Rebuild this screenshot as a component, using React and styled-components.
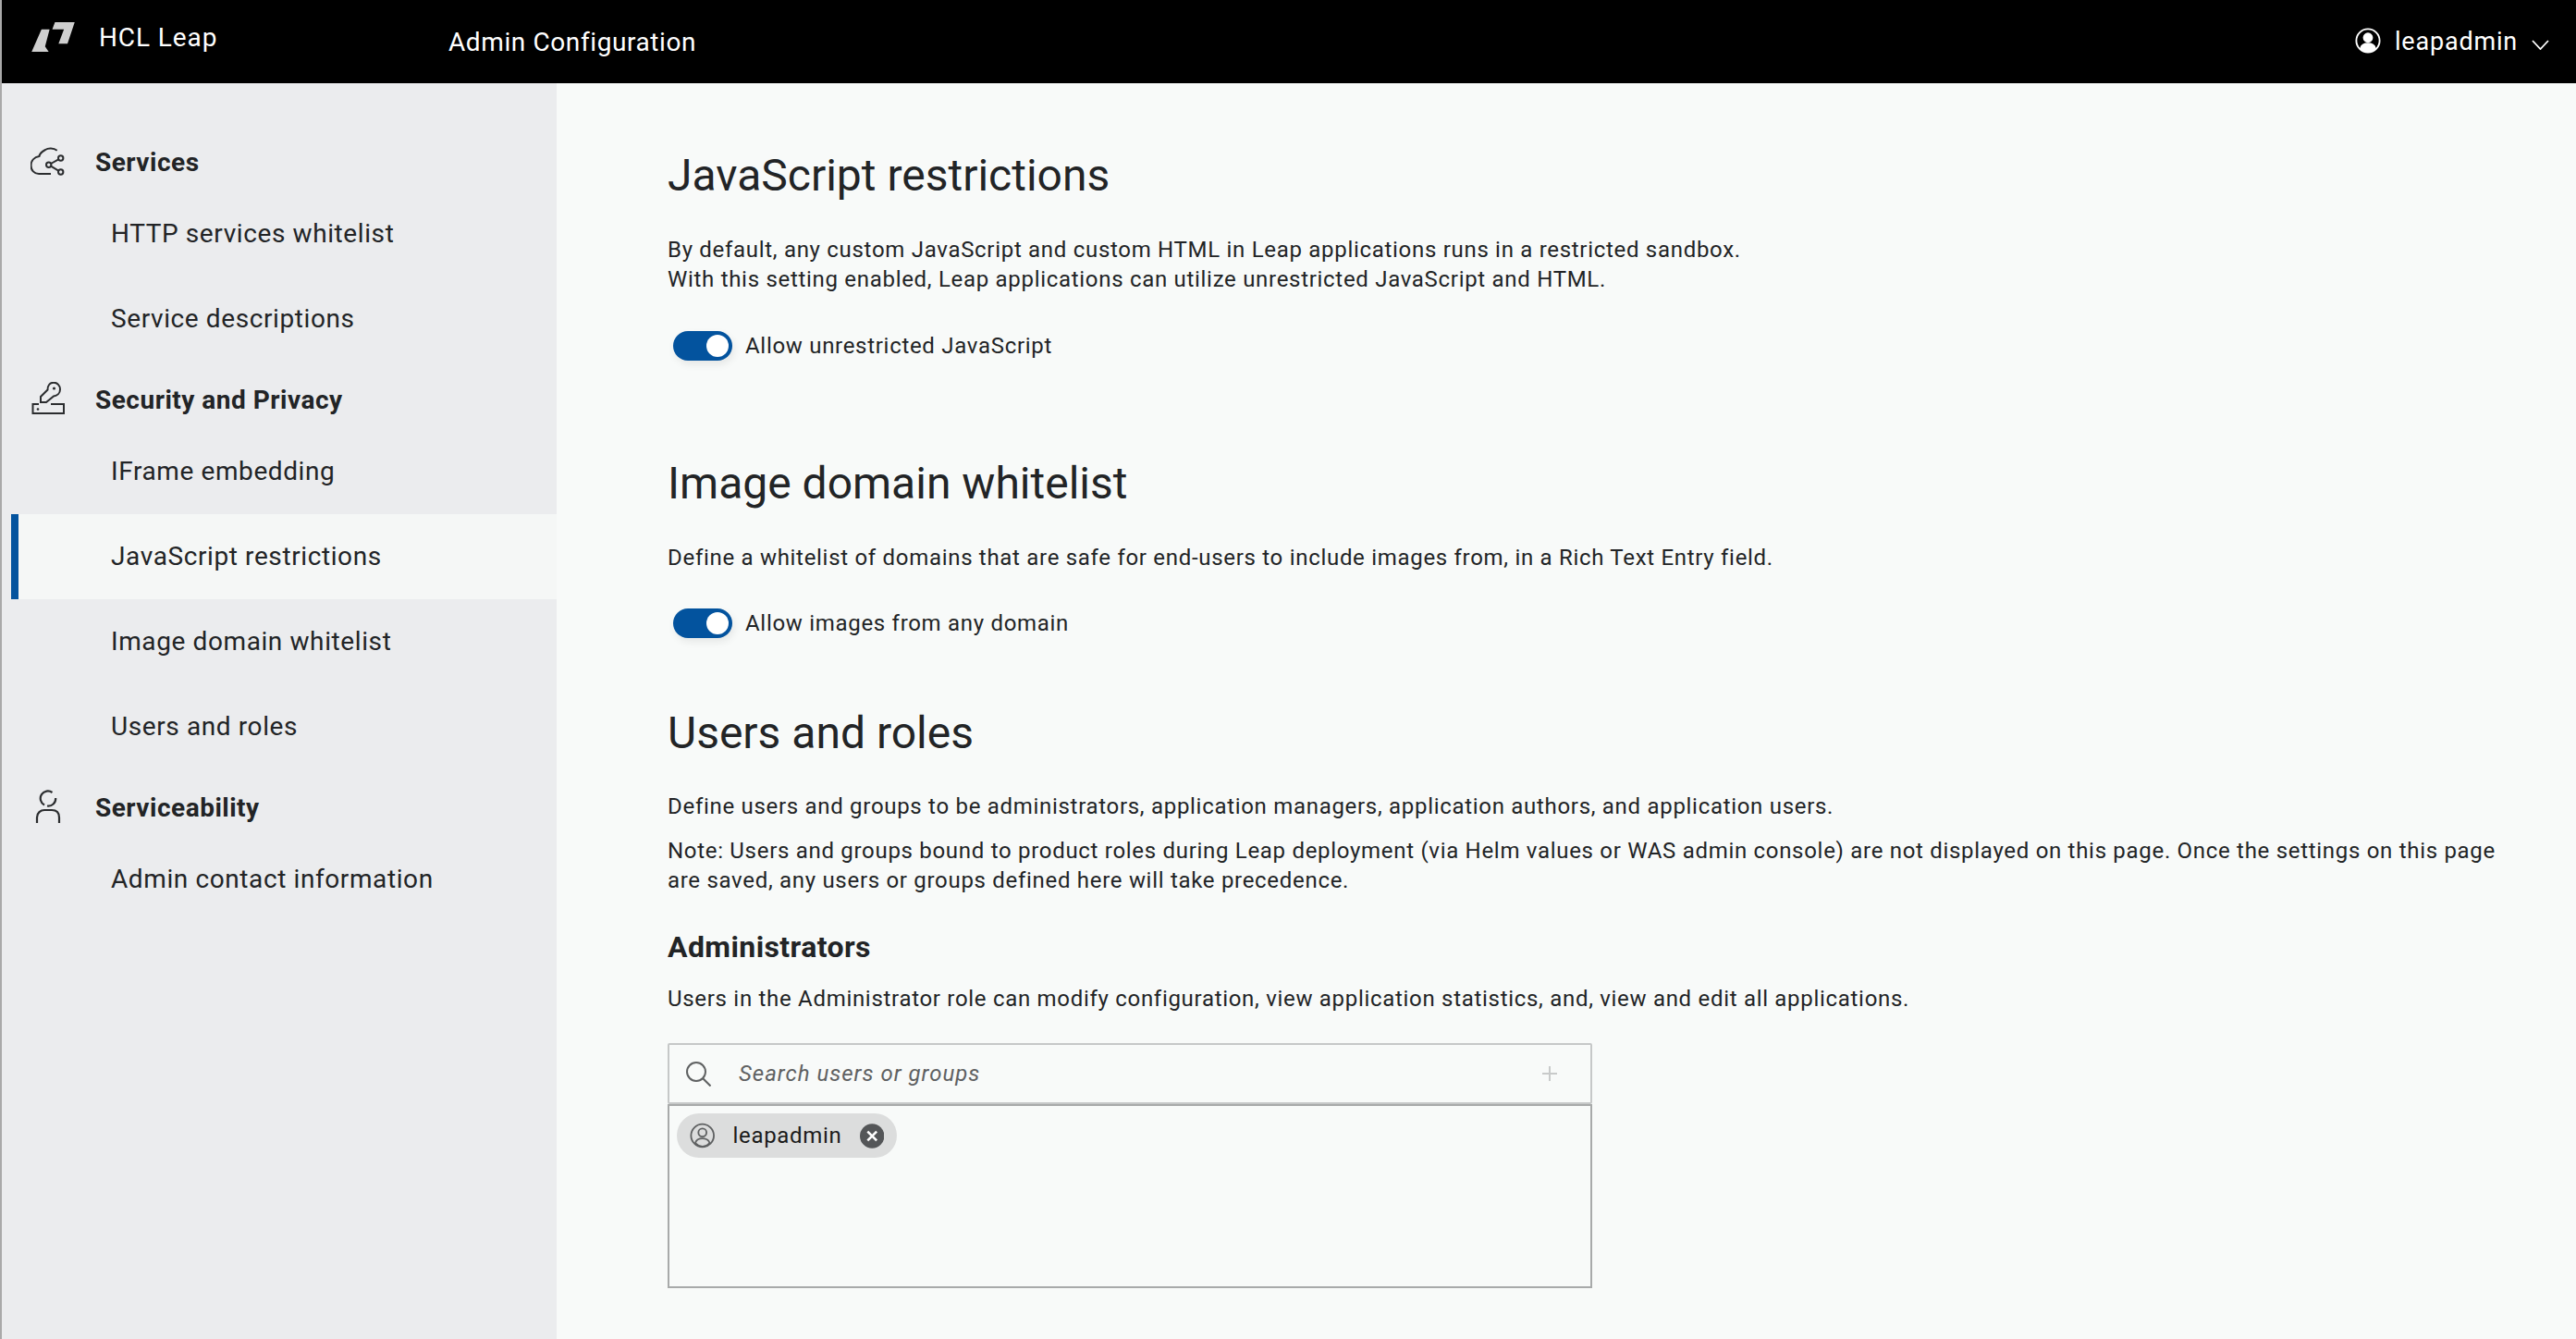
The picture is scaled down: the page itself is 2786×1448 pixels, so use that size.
import React from 'react'
import styled, { createGlobalStyle } from 'styled-components'

const GlobalStyle = createGlobalStyle`
    html, body {
        margin: 0;
        padding: 0;
        height: 100%;
        overflow: hidden;
        background: #f8faf9;
    }
    * {
        box-sizing: border-box;
    }
`

const Shell = styled.div`
    width: 2786px;
    height: 1448px;
    display: flex;
    flex-direction: column;
    border-left: 2px solid #a9a9a9;
    font-family: Roboto, "Liberation Sans", sans-serif;
    color: #222426;
    overflow: hidden;
`

const Header = styled.header`
    height: 90px;
    flex: none;
    background: #000;
    color: #fff;
    display: flex;
    align-items: center;
    padding-left: 32px;
    padding-right: 29px;
`

const Brand = styled.div`
    width: 451px;
    display: flex;
    align-items: center;
    gap: 26px;
    font-size: 28px;
    letter-spacing: 0.9px;
    margin-bottom: 10px;
`

const AppTitle = styled.div`
    font-size: 28px;
    letter-spacing: 0.6px;
    flex: 1;
`

const UserMenu = styled.div`
    display: flex;
    align-items: center;
    font-size: 27px;
    letter-spacing: 0.8px;
    gap: 15px;
`

const UserAvatar = styled.span`
    display: flex;
    margin-bottom: 2px;
`

const UserCaret = styled.span`
    display: flex;
    margin-top: 6px;
`

const Body = styled.div`
    flex: 1;
    display: flex;
    min-height: 0;
`

const Sidebar = styled.nav`
    width: 600px;
    flex: none;
    background: #ebecee;
    padding-top: 53px;
`

const Group = styled.div`
    height: 64px;
    display: flex;
    align-items: center;
    padding-left: 31px;
    font-size: 28px;
    font-weight: 700;
    letter-spacing: 0.5px;
    gap: 32px;
    margin-top: ${(p) => p.$top || 0}px;
`

const GroupIcon = styled.span`
    width: 38px;
    display: flex;
    align-items: center;
    justify-content: center;
    flex: none;
`

const Item = styled.div`
    height: 92px;
    display: flex;
    align-items: center;
    font-size: 28px;
    letter-spacing: 0.6px;
    padding-bottom: 2px;
    padding-left: ${(p) => (p.$active ? '100px' : '118px')};
    margin-left: ${(p) => (p.$active ? '10px' : '0')};
    background: ${(p) => (p.$active ? '#f5f7f6' : 'transparent')};
    border-left: ${(p) => (p.$active ? '8px solid #03539e' : 'none')};
`

const Main = styled.main`
    flex: 1;
    min-width: 0;
    background: #f8faf9;
    padding: 0 60px 0 120px;
`

const Title = styled.h2`
    margin: ${(p) => p.$top}px 0 0;
    font-size: 48px;
    line-height: 56px;
    font-weight: 400;
    letter-spacing: 0;
    color: #222426;
`

const Text = styled.p`
    margin: ${(p) => p.$top}px 0 0;
    font-size: 24px;
    line-height: 32px;
    letter-spacing: 0.7px;
    color: #222426;
`

const ToggleRow = styled.div`
    display: flex;
    align-items: center;
    height: 32px;
    margin: ${(p) => p.$top}px 0 0 6px;
    font-size: 24px;
    letter-spacing: 0.7px;
    gap: 14px;
`

const Track = styled.span`
    width: 64px;
    height: 32px;
    border-radius: 16px;
    background: #03539e;
    box-shadow: 2px 4px 8px rgba(0, 0, 0, 0.08);
    display: flex;
    align-items: center;
    justify-content: flex-end;
    padding-right: 4px;
`

const Knob = styled.span`
    width: 24px;
    height: 24px;
    border-radius: 50%;
    background: #fff;
`

const SubTitle = styled.h3`
    margin: 36px 0 0;
    font-size: 32px;
    line-height: 40px;
    font-weight: 700;
    letter-spacing: 0.4px;
`

const Picker = styled.div`
    width: 1000px;
    margin-top: 32px;
`

const SearchBox = styled.div`
    height: 66px;
    border: 2px solid #c6c8c8;
    border-radius: 2px;
    display: flex;
    align-items: center;
    padding: 0 35px 0 18px;
    font-size: 24px;
    font-style: italic;
    letter-spacing: 1px;
    color: #5f6162;
    gap: 30px;
`

const SearchLabel = styled.span`
    flex: 1;
`

const Selected = styled.div`
    height: 199px;
    border: 2px solid #a8aaaa;
    padding: 8px;
`

const Chip = styled.div`
    display: inline-flex;
    align-items: center;
    height: 48px;
    width: 238px;
    border-radius: 24px;
    background: #dcdddd;
    padding: 0 14px;
    font-size: 24px;
    letter-spacing: 0.7px;
    color: #1b1b1b;
    gap: 19px;
`

const ChipName = styled.span`
    flex: 1;
`

const LogoIcon = () => (
    <svg width="47" height="32" viewBox="0 0 48 33">
        <polygon points="11,8 20,8 15,27 19,33 0,33" fill="#cfcfcf" />
        <polygon points="26,0 48,0 40,24 30,24 36,8 23,8" fill="#cfcfcf" />
    </svg>
)

const CloudIcon = () => (
    <svg width="38" height="32" viewBox="13 13 38 32" fill="none" stroke="#2b2d2f" strokeWidth="2">
        <path d="M41.7 16.7C38 14 32 14 29 16C25 18 23 20 22.5 23C17 24 13.5 28 13.5 33C13.5 38 17 42 22 42H35" />
        <circle cx="45.7" cy="25" r="2.7" />
        <circle cx="32.7" cy="32.3" r="2.7" />
        <circle cx="45.7" cy="40" r="2.7" />
        <path d="M43.3 26.4L35 31M35 33.7L43.3 38.6" />
    </svg>
)

const KeyIcon = () => (
    <svg width="38" height="38" viewBox="13 8 38 38" fill="none" stroke="#2b2d2f" strokeWidth="2">
        <path d="M24 30V24L31.5 16.5C31.5 12 34 8.7 38 8.7C42 8.7 45 12 45 16C45 20 42 23 38 23.5L30 30Z" />
        <circle cx="38.5" cy="15" r="1.6" fill="#2b2d2f" stroke="none" />
        <path d="M22 32H15.5V42H49V32H35" />
        <circle cx="21" cy="37.5" r="1.3" fill="#2b2d2f" stroke="none" />
    </svg>
)

const PersonIcon = () => (
    <svg width="38" height="38" viewBox="13 8 38 38" fill="none" stroke="#2b2d2f" strokeWidth="2.2">
        <path d="M36.5 11A8 8 0 1 0 28 24.5" />
        <path d="M31 25.5A8 8 0 0 0 40.2 17" />
        <path d="M20 44V38C20 33 24 30 28 30H36C41 30 44 33 44 38V44" />
    </svg>
)

const UserCircle = ({ size = 28, color = '#fff', fill = true }) => (
    <svg width={size} height={size} viewBox="0 0 30 30" fill="none" stroke={color} strokeWidth="2">
        <circle cx="15" cy="15" r="13.5" />
        <circle cx="15" cy="11.5" r="4.8" fill={fill ? color : 'none'} />
        <path d="M6.5 24C7.5 20 11 18.5 15 18.5C19 18.5 22.5 20 23.5 24C21 26.6 18 28 15 28C12 28 9 26.6 6.5 24Z" fill={fill ? color : 'none'} />
    </svg>
)

const Chevron = () => (
    <svg width="19" height="11" viewBox="0 0 19 11" fill="none" stroke="#fff" strokeWidth="1.8">
        <path d="M1 1L9.5 10L18 1" />
    </svg>
)

const SearchIcon = () => (
    <svg width="27" height="27" viewBox="0 0 27 27" fill="none" stroke="#5f6162" strokeWidth="2">
        <circle cx="11" cy="11" r="10" />
        <path d="M18 18L26.5 26.5" />
    </svg>
)

const PlusIcon = () => (
    <svg width="18" height="18" viewBox="0 0 18 18" stroke="#c8caca" strokeWidth="2">
        <path d="M9 1V17M1 9H17" />
    </svg>
)

const RemoveIcon = () => (
    <svg width="27" height="27" viewBox="0 0 27 27">
        <circle cx="13.5" cy="13.5" r="13.5" fill="#545658" />
        <path d="M8.5 8.5L18.5 18.5M18.5 8.5L8.5 18.5" stroke="#fff" strokeWidth="2.6" />
    </svg>
)

const Toggle = ({ label, top }) => (
    <ToggleRow $top={top}>
        <Track><Knob /></Track>
        {label}
    </ToggleRow>
)

const App = () => {
    return (
        <>
            <GlobalStyle />
            <Shell>
                <Header>
                    <Brand>
                        <LogoIcon />
                        HCL Leap
                    </Brand>
                    <AppTitle>Admin Configuration</AppTitle>
                    <UserMenu>
                        <UserAvatar><UserCircle /></UserAvatar>
                        leapadmin
                        <UserCaret><Chevron /></UserCaret>
                    </UserMenu>
                </Header>
                <Body>
                    <Sidebar>
                        <Group><GroupIcon><CloudIcon /></GroupIcon>Services</Group>
                        <Item>HTTP services whitelist</Item>
                        <Item>Service descriptions</Item>
                        <Group $top={9}><GroupIcon><KeyIcon /></GroupIcon>Security and Privacy</Group>
                        <Item>IFrame embedding</Item>
                        <Item $active>JavaScript restrictions</Item>
                        <Item>Image domain whitelist</Item>
                        <Item>Users and roles</Item>
                        <Group $top={9}><GroupIcon><PersonIcon /></GroupIcon>Serviceability</Group>
                        <Item>Admin contact information</Item>
                    </Sidebar>
                    <Main>
                        <Title $top={72}>JavaScript restrictions</Title>
                        <Text $top={36}>
                            By default, any custom JavaScript and custom HTML in Leap applications runs in a restricted sandbox.
                            <br />
                            With this setting enabled, Leap applications can utilize unrestricted JavaScript and HTML.
                        </Text>
                        <Toggle top={40} label="Allow unrestricted JavaScript" />
                        <Title $top={105}>Image domain whitelist</Title>
                        <Text $top={36}>
                            Define a whitelist of domains that are safe for end-users to include images from, in a Rich Text Entry field.
                        </Text>
                        <Toggle top={39} label="Allow images from any domain" />
                        <Title $top={75}>Users and roles</Title>
                        <Text $top={35}>
                            Define users and groups to be administrators, application managers, application authors, and application users.
                        </Text>
                        <Text $top={16}>
                            Note: Users and groups bound to product roles during Leap deployment (via Helm values or WAS admin console) are not displayed on this page. Once the settings on this page are saved, any users or groups defined here will take precedence.
                        </Text>
                        <SubTitle>Administrators</SubTitle>
                        <Text $top={20}>
                            Users in the Administrator role can modify configuration, view application statistics, and, view and edit all applications.
                        </Text>
                        <Picker>
                            <SearchBox>
                                <SearchIcon />
                                <SearchLabel>Search users or groups</SearchLabel>
                                <PlusIcon />
                            </SearchBox>
                            <Selected>
                                <Chip>
                                    <UserCircle size={28} color="#5f6162" fill={false} />
                                    <ChipName>leapadmin</ChipName>
                                    <RemoveIcon />
                                </Chip>
                            </Selected>
                        </Picker>
                    </Main>
                </Body>
            </Shell>
        </>
    )
}

export default App
